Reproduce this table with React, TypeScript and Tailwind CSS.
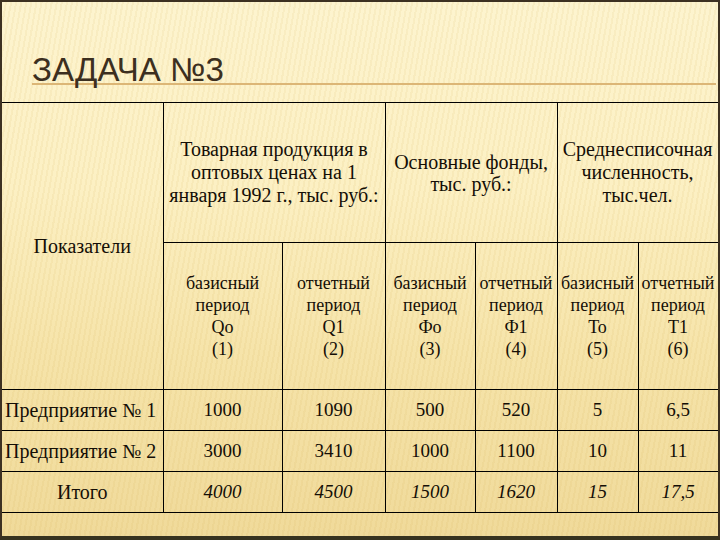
const periodCols = [
  { kind: "базисный", sym: "Qo", n: "(1)" },
  { kind: "отчетный", sym: "Q1", n: "(2)" },
  { kind: "базисный", sym: "Фо", n: "(3)" },
  { kind: "отчетный", sym: "Ф1", n: "(4)" },
  { kind: "базисный", sym: "То", n: "(5)" },
  { kind: "отчетный", sym: "Т1", n: "(6)" },
];

const rows = [
  { name: "Предприятие № 1", values: ["1000", "1090", "500", "520", "5", "6,5"] },
  { name: "Предприятие № 2", values: ["3000", "3410", "1000", "1100", "10", "11"] },
];

const total = { name: "Итого", values: ["4000", "4500", "1500", "1620", "15", "17,5"] };

// serif like the slide's Times New Roman
const cell =
  "border border-black p-0 text-center align-middle [font-family:'Times_New_Roman','Liberation_Serif',Tinos,'DejaVu_Serif','Noto_Serif',serif] text-[#140e06]";

export default function App() {
  return (
    <div className="box-border flex h-[540px] w-[720px] flex-col overflow-hidden border-x-2 border-t-2 border-b-4 border-x-[#3d3122] border-t-[#3d3122] border-b-[#37331f] bg-[image:repeating-linear-gradient(100deg,rgba(255,255,255,0)_0px,rgba(255,255,255,0)_3px,rgba(205,165,70,0.09)_3px,rgba(205,165,70,0.09)_5px),linear-gradient(180deg,#fdf4cf_0%,#fcf0c3_35%,#f6e4aa_65%,#f0da9a_100%)] text-[#140e06]">
      <div className="ml-[30px] mr-[2px] mt-[55px] border-b-2 border-[#dcb676]">
        <h1 className="m-0 [font-family:'Liberation_Sans',Arial,sans-serif] text-[33px] leading-[26px] font-normal text-[#3c2f20]">
          ЗАДАЧА №3
        </h1>
      </div>

      <table className="mt-[17px] w-[716px] table-fixed border-collapse">
        <colgroup>
          <col className="w-[161px]" />
          <col className="w-[119px]" />
          <col className="w-[103px]" />
          <col className="w-[90px]" />
          <col className="w-[82px]" />
          <col className="w-[81px]" />
          <col className="w-[80px]" />
        </colgroup>
        <tbody>
          <tr className="h-[140px]">
            <td rowSpan={2} className={`${cell} border-l-0 text-[20px] leading-[23px]`}>
              Показатели
            </td>
            <td colSpan={2} className={`${cell} text-[20px] leading-[23px]`}>
              Товарная продукция в<br />
              оптовых ценах на 1<br />
              января 1992 г., тыс. руб.:
            </td>
            <td colSpan={2} className={`${cell} text-[20px] leading-[22px]`}>
              Основные фонды,<br />
              тыс. руб.:
            </td>
            <td colSpan={2} className={`${cell} text-[20px] leading-[23px]`}>
              Среднесписочная<br />
              численность,<br />
              тыс.чел.
            </td>
          </tr>
          <tr className="h-[147px]">
            {periodCols.map((c) => (
              <td key={c.n} className={`${cell} text-[18px] leading-[22px]`}>
                {c.kind}
                <br />
                период
                <br />
                {c.sym}
                <br />
                {c.n}
              </td>
            ))}
          </tr>
          {rows.map((r) => (
            <tr key={r.name} className="h-[41px]">
              <td className={`${cell} border-l-0 pl-[3px] text-left text-[20px] leading-[24px] whitespace-nowrap`}>
                {r.name}
              </td>
              {r.values.map((v, i) => (
                <td key={i} className={`${cell} text-[19px] leading-[24px]`}>
                  {v}
                </td>
              ))}
            </tr>
          ))}
          <tr className="h-[41px]">
            <td className={`${cell} border-l-0 text-[20px] leading-[24px]`}>{total.name}</td>
            {total.values.map((v, i) => (
              <td key={i} className={`${cell} text-[19px] leading-[24px] italic`}>
                {v}
              </td>
            ))}
          </tr>
        </tbody>
      </table>
    </div>
  );
}
